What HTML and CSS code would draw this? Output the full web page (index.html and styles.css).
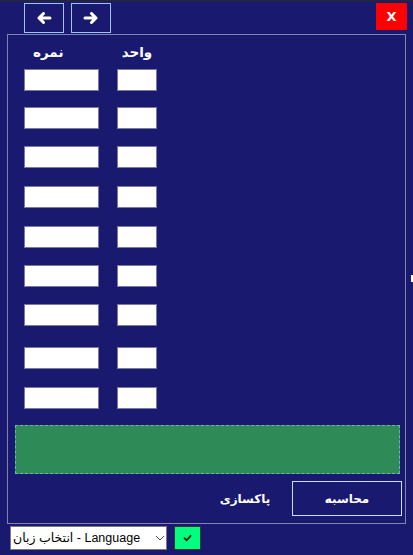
FILE: index.html
```html
<!DOCTYPE html>
<html lang="fa">
<head>
<meta charset="utf-8">
<title>Grade calculator</title>
<link rel="stylesheet" href="styles.css">
</head>
<body>
<div class="app">
  <div class="topbar">
    <div class="nav">
      <button class="nav-btn" aria-label="back">
        <svg width="16" height="12" viewBox="0 0 16 12"><path d="M14 6H3M7.5 1.5L3 6l4.5 4.5" fill="none" stroke="#fff" stroke-width="3" stroke-linecap="round" stroke-linejoin="round"/></svg>
      </button>
      <button class="nav-btn" aria-label="forward">
        <svg width="16" height="12" viewBox="0 0 16 12"><path d="M2 6h11M8.5 1.5L13 6l-4.5 4.5" fill="none" stroke="#fff" stroke-width="3" stroke-linecap="round" stroke-linejoin="round"/></svg>
      </button>
    </div>
    <button class="close-btn">X</button>
  </div>

  <div class="panel">
    <div class="head">
      <div class="h-grade">نمره</div>
      <div class="h-unit">واحد</div>
    </div>
    <div class="rows">
      <div class="row"><input class="grade" type="text"><input class="unit" type="text"></div>
      <div class="row"><input class="grade" type="text"><input class="unit" type="text"></div>
      <div class="row"><input class="grade" type="text"><input class="unit" type="text"></div>
      <div class="row"><input class="grade" type="text"><input class="unit" type="text"></div>
      <div class="row"><input class="grade" type="text"><input class="unit" type="text"></div>
      <div class="row"><input class="grade" type="text"><input class="unit" type="text"></div>
      <div class="row"><input class="grade" type="text"><input class="unit" type="text"></div>
      <div class="row"><input class="grade" type="text"><input class="unit" type="text"></div>
      <div class="row"><input class="grade" type="text"><input class="unit" type="text"></div>
    </div>
    <div class="result"></div>
    <div class="actions">
      <button class="clear-btn">پاکسازی</button>
      <button class="calc-btn">محاسبه</button>
    </div>
  </div>

  <div class="footer">
    <div class="lang">
      <select class="lang-select">
        <option>انتخاب زبان - Language</option>
      </select>
      <svg class="chev" width="10" height="6" viewBox="0 0 10 6"><path d="M1 1l4 4 4-4" fill="none" stroke="#555" stroke-width="1"/></svg>
    </div>
    <button class="ok-btn" aria-label="ok">
      <svg width="9" height="8" viewBox="0 0 9 8"><path d="M1.5 4.2L3.6 6.3 7.6 1.8" fill="none" stroke="#0a2a14" stroke-width="1.8" stroke-linecap="round" stroke-linejoin="round"/></svg>
    </button>
  </div>
  <div class="edge-mark"></div>
</div>
</body>
</html>
```

FILE: styles.css
```css
* { box-sizing: border-box; }
html, body { margin: 0; padding: 0; }
body {
  background: #191970;
  width: 413px;
  height: 555px;
  overflow: hidden;
  font-family: "DejaVu Sans", "Noto Sans", sans-serif;
}
.app {
  position: relative;
  width: 413px;
  height: 555px;
  border-top: 2px solid #23234a;
}
.topbar {
  height: 32px;
  display: flex;
  justify-content: space-between;
  align-items: flex-start;
  padding: 1px 6px 0 24px;
}
.nav { display: flex; gap: 7px; }
.nav-btn {
  width: 40px;
  height: 30px;
  background: transparent;
  border: 1px solid #9cc6ee;
  display: flex;
  align-items: center;
  justify-content: center;
  padding: 0;
  margin: 0;
}
.close-btn {
  width: 31px;
  height: 27px;
  background: #ff0000;
  border: none;
  color: #fff;
  font-family: "DejaVu Sans", sans-serif;
  font-weight: bold;
  font-size: 13px;
  padding: 0;
  margin: 0;
}
.panel {
  margin-left: 7px;
  width: 399px;
  height: 490px;
  border: 1px solid #8484a8;
  display: flex;
  flex-direction: column;
}
.head {
  height: 34px;
  display: flex;
  align-items: center;
  padding-left: 16px;
  color: #fff;
  font-weight: bold;
  font-size: 13.5px;
  gap: 18px;
}
.h-grade { width: 75px; padding-left: 9px; }
.h-unit { width: 40px; text-align: center; }
.rows {
  display: flex;
  flex-direction: column;
  padding-left: 16px;
}
.row {
  display: flex;
  gap: 18px;
  margin-top: 18px;
}
.row:first-child { margin-top: 0; }
.row:nth-child(2) { margin-top: 16px; }
.row:nth-child(3) { margin-top: 17px; }
.row:nth-child(6), .row:nth-child(7) { margin-top: 17px; }
.row:nth-child(8) { margin-top: 21px; }
input {
  height: 22px;
  border: 1px solid #7878a0;
  background: #fff;
  margin: 0;
  padding: 0;
  outline: none;
}
.grade { width: 75px; }
.unit { width: 40px; }
.result {
  margin: 16px 5px 0 7px;
  height: 49px;
  background: #2e8b57;
  border: 1px dashed #6fb8a8;
}
.actions {
  display: flex;
  justify-content: flex-end;
  gap: 2px;
  margin-top: 7px;
  padding-right: 3px;
}
.clear-btn, .calc-btn {
  background: transparent;
  color: #fff;
  font-family: "DejaVu Sans", sans-serif;
  font-weight: bold;
  font-size: 12px;
  height: 35px;
  padding: 0;
  margin: 0;
}
.clear-btn { width: 90px; border: none; }
.calc-btn { width: 110px; border: 1px solid #c4def6; }
.footer {
  display: flex;
  gap: 7px;
  padding-left: 10px;
  margin-top: 2px;
}
.lang { position: relative; }
.lang-select {
  appearance: none;
  -webkit-appearance: none;
  width: 157px;
  height: 24px;
  border: 1px solid #7a7a7a;
  background: #fff;
  color: #000;
  font-family: "Liberation Sans", "DejaVu Sans", sans-serif;
  font-size: 12.5px;
  padding: 0 0 0 2px;
  margin: 0;
  direction: ltr;
  border-radius: 0;
}
.chev {
  position: absolute;
  left: 145px;
  top: 9px;
  pointer-events: none;
}
.ok-btn {
  width: 27px;
  height: 24px;
  background: #00ff7f;
  border: 1px solid #333;
  display: flex;
  align-items: center;
  justify-content: center;
  padding: 0;
  margin: 0;
}
.edge-mark {
  position: absolute;
  left: 411px;
  top: 273px;
  width: 2px;
  height: 7px;
  background: #fff;
}
```
